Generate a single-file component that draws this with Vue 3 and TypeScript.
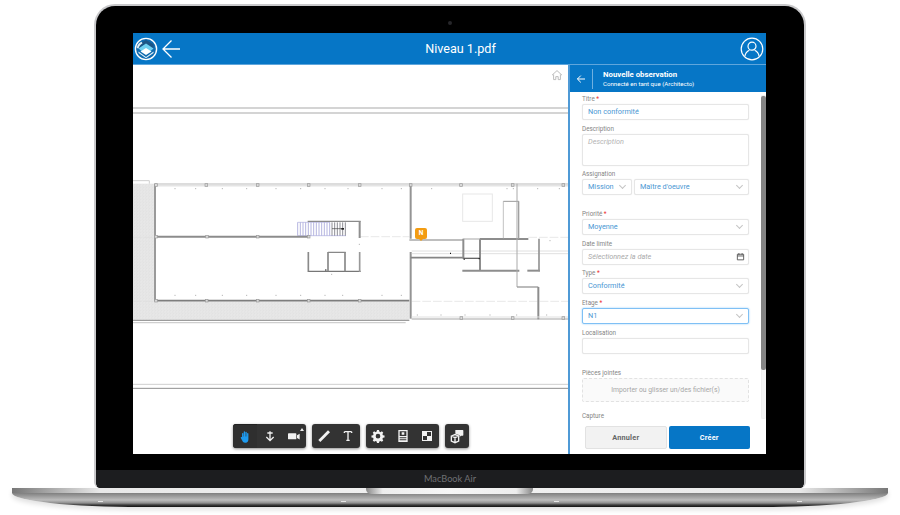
<script setup lang="ts">
type Seg = [number, number, number, number, number, string?]

interface Tool {
  fill?: string
  line?: string
  active?: boolean
  flag?: boolean
}

// the plan is traced in the coordinates of a 3x crop, hence the big numbers
const walls: Seg[] = [
  [9, 138, 1317, 138, 4, '#c6c6c6'],
  [9, 153, 1317, 153, 4, '#c6c6c6'],
  [9, 967, 1317, 967, 3, '#cfcfcf'],
  [9, 979, 1317, 979, 3, '#8f8f8f'],
  [9, 356, 58, 356, 3, '#cfcfcf'],
  [58, 356, 58, 365, 3, '#cfcfcf'],
  [75, 366, 1317, 366, 3, '#b8b8b8'],
  [75, 371, 1317, 371, 5, '#e4e4e4'],
  [75, 365, 75, 718, 6, '#9a9a9a'],
  [75, 524, 535, 524, 6, '#8c8c8c'],
  [75, 716, 838, 716, 5, '#7d7d7d'],
  [9, 775, 838, 775, 3, '#8a8a8a'],
  [9, 782, 827, 782, 4, '#cfcfcf'],
  [533, 478, 692, 478, 4, '#8a8a8a'],
  [689, 478, 689, 528, 6, '#8f8f8f'],
  [535, 570, 535, 630, 5, '#8a8a8a'],
  [535, 628, 692, 628, 4, '#777'],
  [594, 570, 594, 628, 5, '#888'],
  [645, 570, 645, 628, 5, '#888'],
  [594, 571, 647, 571, 4, '#888'],
  [689, 570, 689, 630, 5, '#999'],
  [842, 368, 842, 530, 6, '#949494'],
  [842, 570, 842, 770, 6, '#949494'],
  [838, 534, 1000, 534, 5, '#a8a8a8'],
  [845, 567, 1317, 567, 2, '#d0d0d0'],
  [845, 575, 1317, 575, 2, '#d0d0d0'],
  [842, 587, 1000, 587, 5, '#858585'],
  [1000, 530, 1000, 590, 6, '#8d8d8d'],
  [1050, 530, 1050, 626, 6, '#8d8d8d'],
  [1000, 589, 1050, 589, 4, '#666'],
  [1050, 531, 1195, 531, 6, '#8d8d8d'],
  [1000, 531, 1050, 531, 3, '#a5a5a5'],
  [997, 626, 1168, 626, 6, '#8d8d8d'],
  [1192, 626, 1230, 626, 6, '#8d8d8d'],
  [1227, 530, 1227, 628, 5, '#949494'],
  [1120, 418, 1120, 530, 2, '#a5a5a5'],
  [1120, 418, 1167, 418, 3, '#999'],
  [1166, 418, 1166, 530, 4, '#a0a0a0'],
  [1161, 365, 1161, 675, 3, '#aaa'],
  [1161, 675, 1225, 675, 4, '#999'],
  [1225, 675, 1225, 772, 6, '#8d8d8d'],
  [845, 765, 1317, 765, 3, '#e0e0e0'],
  [845, 771, 1317, 771, 3, '#a5a5a5'],
]

const columns: [number, number][] = [
  ...[78, 229, 383, 536, 689, 842, 993, 1148, 1300].map((x): [number, number] => [x, 369]),
  ...[78, 231, 383, 536].map((x): [number, number] => [x, 524]),
  ...[78, 230, 383, 536, 689].map((x): [number, number] => [x, 716]),
  ...[994, 1148, 1300].map((x): [number, number] => [x, 768]),
]

const dots: [number, number][] = [
  ...[135, 197, 277, 350, 438, 512, 585, 654, 756, 814, 905, 1131, 1150, 1223, 1288].map((x): [number, number] => [x, 380]),
  ...[135, 197, 277, 350, 438, 512, 585, 638, 756, 814].map((x): [number, number] => [x, 700]),
  ...[862, 933, 1005, 1080, 1160, 1250].map((x): [number, number] => [x, 759]),
  [688, 547], [1260, 536], [605, 637],
]

const stairs = Array.from({ length: 13 }, (_, i) => 503 + i * 8)
const stairsDark = Array.from({ length: 6 }, (_, i) => 606 + i * 8)

const toolGroups: Tool[][] = [
  [
    {
      active: true,
      fill: 'M7.6 12.6V7a1 1 0 0 1 2 0v4.4h.5V4.5a1 1 0 0 1 2 0v6.9h.5V5a1 1 0 0 1 2 0v6.4h.5V7a1 1 0 0 1 2 0v8.3c0 3-1.5 5.2-4 5.2h-1.2c-1.9 0-2.9-1.1-3.7-2.6l-2.5-4.3c-.6-1.1.9-2.1 1.7-1.1z',
    },
    { line: 'M12 5v14M8 7.5h8M6.5 13.5l5.5 5.5 5.5-5.5' },
    { fill: 'M4 8h10.5a1 1 0 0 1 1 1v7a1 1 0 0 1-1 1H4a1 1 0 0 1-1-1V9a1 1 0 0 1 1-1zM16.5 11l4-2.2v8.4l-4-2.2z', flag: true },
  ],
  [
    { fill: 'M18 3.5L21 6.5 6.5 21 3.5 18z' },
    { line: 'M6.5 5.5h11M6.5 5.5v2M17.5 5.5v2M12 5.5v13M9.5 18.5h5' },
  ],
  [
    { fill: 'M10.5 3h3l.5 2.4 1.8.8 2-1.3 2.1 2.1-1.3 2 .8 1.8 2.4.5v3l-2.4.5-.8 1.8 1.3 2-2.1 2.1-2-1.3-1.8.8-.5 2.4h-3l-.5-2.4-1.8-.8-2 1.3-2.1-2.1 1.3-2-.8-1.8-2.4-.5v-3l2.4-.5.8-1.8-1.3-2 2.1-2.1 2 1.3 1.8-.8zM12 8.8a3.5 3.5 0 1 0 0 7 3.5 3.5 0 0 0 0-7z' },
    { fill: 'M5 3h14v18H5zM7 5v7h10V5zM7 14v1.5h10V14zM7 17v1.5h10V17zM10 6.5h4V10h-4z' },
    { fill: 'M4.5 4.5h15v15h-15zM12 6v6H6v6h6v-6h6V6z' },
  ],
  [
    { line: 'M3.5 12L9 9.8l5.5 2.2v7.5L9 22l-5.5-2.5zM3.5 12L9 14.5l5.5-2.5M9 14.5V22', fill: 'M9.5 3h11a1 1 0 0 1 1 1v6.5a1 1 0 0 1-1 1H18l-2 2V11L9.5 8.5z' },
  ],
]
</script>

<template>
  <div class="page">
    <div class="lid">
      <div class="bezel">
        <span class="camera"></span>
        <div class="screen">
          <header class="appbar">
            <svg class="logo" viewBox="0 0 24 24" width="24" height="24">
              <circle cx="12" cy="12" r="10.6" fill="#0f6bb0" stroke="#fff" stroke-width="1.4" />
              <path d="M12 3l7.500 4.300v4.200L12 7 4.500 11.500V7.300z" fill="#1c5585" />
              <path d="M2.800 11c.5-3 2.200-5.200 4.700-6.200l1 1.500C6 8 5 9.500 4.600 11.500z" fill="#dfeef7" />
              <path d="M12 6.500l7.500 5-3.500 3H8l-3.500-3z" fill="#6fd0f0" />
              <path d="M12 11l5.500 3.500L12 18l-5.500-3.500z" fill="#fff" />
              <path d="M4.500 14.500L12 20l7.500-5.500V16L12 21.200 4.500 16z" fill="#dfeef7" />
            </svg>
            <svg class="back" viewBox="0 0 20 20" width="20" height="20">
              <path d="M19 10H2M10.500 1.500L2 10l8.500 8.500" fill="none" stroke="#fff" stroke-width="1.3" />
            </svg>
            <h1 class="doc-title">Niveau 1.pdf</h1>
            <svg class="user" viewBox="0 0 24 24" width="24" height="24">
              <circle cx="12" cy="12" r="10.8" fill="none" stroke="#fff" stroke-width="1.2" />
              <circle cx="12" cy="9.2" r="4" fill="none" stroke="#fff" stroke-width="1.2" />
              <path d="M4.800 19.500c.6-3.600 3-5.500 4.600-6.200M19.200 19.500c-.6-3.600-3-5.500-4.600-6.200" fill="none" stroke="#fff" stroke-width="1.2" />
            </svg>
          </header>

          <div class="workspace">
            <section class="plan">
              <svg class="drawing" viewBox="9 9 1308 1167" width="436" height="389">
                <defs>
                  <pattern id="stipple" width="9" height="9" patternUnits="userSpaceOnUse">
                    <rect width="9" height="9" fill="#e6e6e6" />
                    <rect x="1" y="2" width="2" height="2" fill="#dedede" />
                    <rect x="6" y="0" width="2" height="2" fill="#ececec" />
                    <rect x="4" y="6" width="2" height="2" fill="#dedede" />
                  </pattern>
                </defs>
                <rect x="9" y="365" width="66" height="410" fill="url(#stipple)" />
                <rect x="75" y="718" width="763" height="57" fill="url(#stipple)" />
                <rect x="998" y="396" width="89" height="82" fill="none" stroke="#e8e8e8" stroke-width="3" />
                <path d="M690 524H838M1195 526H1317M845 718H1317M9 526H75M9 718H75" fill="none" stroke="#dcdcdc" stroke-width="2" stroke-dasharray="26 6" />
                <line v-for="x in stairs" :key="x" :x1="x" :x2="x" y1="481" y2="521" stroke="#8f8fd0" stroke-width="2" />
                <path d="M503 481H600M503 521H648" stroke="#a9a9dc" stroke-width="2" fill="none" />
                <line v-for="x in stairsDark" :key="x" :x1="x" :x2="x" y1="481" y2="521" stroke="#55555f" stroke-width="2" />
                <path d="M606 500H640" stroke="#444" stroke-width="2" />
                <rect x="634" y="498" width="8" height="5" fill="#222" />
                <line
                  v-for="(w, i) in walls"
                  :key="i"
                  :x1="w[0]"
                  :y1="w[1]"
                  :x2="w[2]"
                  :y2="w[3]"
                  :stroke-width="w[4]"
                  :stroke="w[5] ?? '#8d8d8d'"
                />
                <rect
                  v-for="(c, i) in columns"
                  :key="'c' + i"
                  :x="c[0] - 4"
                  :y="c[1] - 4"
                  width="8"
                  height="8"
                  fill="#d8d8d8"
                  stroke="#9a9a9a"
                  stroke-width="2"
                />
                <rect v-for="(d, i) in dots" :key="'d' + i" :x="d[0] - 1.5" :y="d[1] - 1.5" width="3" height="3" fill="#a8a8a8" />
                <path d="M960 574h3M586 624h3M1001 592h3M1046 590h3" stroke="#111" stroke-width="4" />
              </svg>

              <svg class="home" viewBox="0 0 12 12" width="12" height="12">
                <path d="M1 6.200L6 1.600l5 4.600M2.600 5.400v5.200h2.200V7.600h2.400v3h2.200V5.400" fill="none" stroke="#bdbdbd" stroke-width="1" />
              </svg>

              <span class="marker">N</span>

              <div class="toolbar">
                <div v-for="(group, g) in toolGroups" :key="g" class="tool-group">
                  <div v-for="(tool, t) in group" :key="t" class="tool" :class="{ active: tool.active, flag: tool.flag }">
                    <svg viewBox="0 0 24 24" width="16" height="16">
                      <path v-if="tool.fill" :d="tool.fill" fill="currentColor" fill-rule="evenodd" />
                      <path v-if="tool.line" :d="tool.line" fill="none" stroke="currentColor" stroke-width="2" />
                    </svg>
                  </div>
                </div>
              </div>
            </section>

            <aside class="panel">
              <div class="panel-head">
                <svg viewBox="0 0 10 10" width="10" height="10">
                  <path d="M9 5H1.400M4.800 1.600L1.400 5l3.400 3.400" fill="none" stroke="#fff" stroke-width="1" />
                </svg>
                <span class="head-rule"></span>
                <div>
                  <div class="head-title">Nouvelle observation</div>
                  <div class="head-sub">Connecté en tant que (Architecto)</div>
                </div>
              </div>

              <div class="panel-body">
                <form class="fields" @submit.prevent>
                  <div class="field">
                    <label>Titre <em>*</em></label>
                    <div class="control value">Non conformité</div>
                  </div>
                  <div class="field">
                    <label>Description</label>
                    <div class="control area">Description</div>
                  </div>
                  <div class="field">
                    <label>Assignation</label>
                    <div class="pair">
                      <div class="control value mission">Mission<i class="chev"></i></div>
                      <div class="control value grow">Maître d'oeuvre<i class="chev"></i></div>
                    </div>
                  </div>
                  <div class="field spaced">
                    <label>Priorité <em>*</em></label>
                    <div class="control value">Moyenne<i class="chev"></i></div>
                  </div>
                  <div class="field">
                    <label>Date limite</label>
                    <div class="control hint">
                      Sélectionnez la date
                      <svg viewBox="0 0 10 10" width="9" height="9">
                        <path d="M1.500 2.500h7v6.200h-7zM1.500 4.400h7M3.200 1.200v2M6.800 1.200v2" fill="none" stroke="#555" stroke-width="1" />
                      </svg>
                    </div>
                  </div>
                  <div class="field">
                    <label>Type <em>*</em></label>
                    <div class="control value">Conformité<i class="chev"></i></div>
                  </div>
                  <div class="field">
                    <label>Etage <em>*</em></label>
                    <div class="control value focused">N1<i class="chev"></i></div>
                  </div>
                  <div class="field">
                    <label>Localisation</label>
                    <div class="control"></div>
                  </div>
                  <div class="field spaced">
                    <label>Pièces jointes</label>
                    <div class="dropzone">Importer ou glisser un/des fichier(s)</div>
                  </div>
                  <div class="field capture">
                    <label>Capture</label>
                  </div>
                </form>
                <div class="scrollbar"><span class="thumb"></span></div>
              </div>

              <div class="panel-foot">
                <button type="button" class="btn cancel">Annuler</button>
                <button type="button" class="btn create">Créer</button>
              </div>
            </aside>
          </div>
        </div>
      </div>
      <div class="chin">MacBook Air</div>
    </div>
    <div class="base"><span class="notch"></span></div>
  </div>
</template>

<style scoped>
.page {
  width: 900px;
  height: 515px;
  padding-top: 4px;
  box-sizing: border-box;
  background: #fff;
  display: flex;
  flex-direction: column;
  align-items: center;
  overflow: hidden;
  font-family: Roboto, "Liberation Sans", sans-serif;
}
.lid {
  width: 712px;
  height: 484px;
  box-sizing: border-box;
  border: 2px solid #c9c9cb;
  border-bottom: 0;
  border-radius: 21px 21px 6px 6px;
  background: #000;
  display: flex;
  flex-direction: column;
  overflow: hidden;
}
.bezel {
  position: relative;
  padding: 27px 38px 16px 37px;
}
.camera {
  position: absolute;
  left: 352px;
  top: 15px;
  width: 4px;
  height: 4px;
  border-radius: 50%;
  background: #26262a;
}
.screen {
  width: 633px;
  height: 421px;
  display: flex;
  flex-direction: column;
  background: #fff;
  overflow: hidden;
}
.appbar {
  height: 31px;
  flex: none;
  background: #0676c6;
  border-bottom: 1px solid #5fa6dc;
  display: flex;
  align-items: center;
  padding: 0 2px 0 1px;
}
.back {
  margin-left: 3px;
}
.doc-title {
  flex: 1;
  margin: 0;
  text-align: center;
  color: #fff;
  font-size: 12.6px;
  font-weight: 400;
  font-family: Roboto, "Open Sans", sans-serif;
}
.workspace {
  flex: 1;
  min-height: 0;
  display: flex;
}
.plan {
  position: relative;
  width: 435px;
  flex: none;
  overflow: hidden;
}
.drawing {
  display: block;
}
.home {
  position: absolute;
  right: 5px;
  top: 4px;
}
.marker {
  position: absolute;
  left: 282px;
  top: 163px;
  width: 12px;
  height: 11px;
  border-radius: 2px;
  background: #f39c12;
  color: #fff;
  font-size: 6.5px;
  font-weight: 700;
  line-height: 11px;
  text-align: center;
}
.marker::after {
  content: "";
  position: absolute;
  left: 4px;
  top: 11px;
  border: 2px solid transparent;
  border-top-color: #f39c12;
  border-bottom: 0;
}
.toolbar {
  position: absolute;
  left: 100px;
  bottom: 6px;
  display: flex;
  gap: 5.5px;
}
.tool-group {
  height: 24px;
  display: flex;
  background: #333;
  border-radius: 3px;
  box-shadow: 0 1px 3px rgba(0, 0, 0, 0.45);
}
.tool {
  position: relative;
  width: 24.4px;
  display: flex;
  align-items: center;
  justify-content: center;
  color: #f2f2f2;
}
.tool.active {
  color: #1e9bf0;
  background: #2f2f2f;
  border-top: 1px solid #222;
  border-radius: 3px 0 0 3px;
  box-sizing: border-box;
}
.tool.flag::after {
  content: "";
  position: absolute;
  right: 2px;
  top: 4px;
  border: 2px solid transparent;
  border-bottom: 3px solid #eee;
  border-top: 0;
}
.panel {
  flex: 1;
  min-width: 0;
  display: flex;
  flex-direction: column;
  border-left: 2px solid #4f9ad6;
  background: #fff;
}
.panel-head {
  height: 27px;
  flex: none;
  background: #0676c6;
  display: flex;
  align-items: center;
  color: #fff;
  padding-left: 6px;
}
.head-rule {
  width: 1px;
  height: 20px;
  margin: 0 10px 0 6px;
  background: #6fb0e0;
}
.head-title {
  font-size: 7.8px;
  font-weight: 700;
  line-height: 10px;
}
.head-sub {
  font-size: 6.1px;
  line-height: 8px;
}
.panel-body {
  flex: 1;
  min-height: 0;
  display: flex;
  overflow: hidden;
}
.fields {
  width: 167px;
  margin: 3px 0 0 12px;
  display: flex;
  flex-direction: column;
  gap: 4.7px;
  flex: none;
}
.field label {
  display: block;
  height: 9px;
  font-size: 6.3px;
  line-height: 9px;
  color: #858585;
}
.field em {
  color: #e33;
  font-style: normal;
}
.field.spaced {
  margin-top: 10px;
}
.field.capture {
  margin-top: 5.5px;
}
.control {
  position: relative;
  height: 16px;
  box-sizing: border-box;
  border: 1px solid #e6e6e6;
  border-radius: 2px;
  box-shadow: 0 0 1px rgba(0, 0, 0, 0.12);
  background: #fff;
  padding-left: 5px;
  font-size: 7.3px;
  line-height: 14px;
}
.value {
  color: #4a97d3;
}
.hint {
  color: #aaa;
  font-style: italic;
  display: flex;
  align-items: center;
  justify-content: space-between;
  padding-right: 3px;
}
.area {
  height: 32px;
  color: #b4b4b4;
  font-style: italic;
}
.focused {
  border-color: #7fc0f5;
  box-shadow: 0 0 2px #8cc8f7;
}
.pair {
  display: flex;
  gap: 2px;
}
.mission {
  width: 50px;
  flex: none;
}
.grow {
  flex: 1;
}
.chev {
  position: absolute;
  right: 6px;
  top: 3px;
  width: 4px;
  height: 4px;
  border-right: 1px solid #c4c4c4;
  border-bottom: 1px solid #c4c4c4;
  transform: rotate(45deg);
}
.dropzone {
  height: 24px;
  box-sizing: border-box;
  border: 1px dashed #e2e2e2;
  border-radius: 2px;
  background: #fafafa;
  color: #a6a6a6;
  font-size: 6.8px;
  line-height: 22px;
  text-align: center;
}
.scrollbar {
  width: 5px;
  margin: 3px 0 1px auto;
  border: 1px solid #eee;
  border-right: 0;
  box-sizing: border-box;
  border-radius: 2px;
  background: #f4f4f4;
}
.thumb {
  display: block;
  height: 274px;
  margin-left: -1px;
  border-radius: 2px;
  background: #858585;
}
.panel-foot {
  height: 34px;
  flex: none;
  display: flex;
  gap: 2px;
  padding: 6px 0 5px 15px;
  box-sizing: border-box;
}
.btn {
  width: 81.5px;
  height: 23px;
  border-radius: 2px;
  font-family: inherit;
  font-size: 7.3px;
  font-weight: 700;
  letter-spacing: 0.2px;
  padding: 0;
}
.cancel {
  background: #f2f2f2;
  border: 1px solid #e2e2e2;
  color: #666;
}
.create {
  background: #0676c6;
  border: 0;
  color: #fff;
}
.chin {
  flex: 1;
  background: #1c1d1f;
  color: #6f7073;
  font-family: Lato, "Open Sans", sans-serif;
  font-size: 9.2px;
  line-height: 18px;
  text-align: center;
}
.base {
  position: relative;
  width: 876px;
  height: 19px;
  flex: none;
  border-radius: 0 0 130px 130px / 0 0 14px 14px;
  box-shadow: 0 3px 5px rgba(0, 0, 0, 0.12);
  background:
    linear-gradient(#e6e6e6, #e6e6e6) 86px 13px / 5px 1px no-repeat,
    linear-gradient(#e6e6e6, #e6e6e6) 329px 13px / 5px 1px no-repeat,
    linear-gradient(#e6e6e6, #e6e6e6) 542px 13px / 5px 1px no-repeat,
    linear-gradient(#e6e6e6, #e6e6e6) 785px 13px / 5px 1px no-repeat,
    linear-gradient(to bottom, transparent 0, transparent 5px, #7f7f7f 5px, #bdbdbd 12px, #8f8f8f 15px, #3a3a3a 17px, #111 19px),
    linear-gradient(to right, #777 0, #e8e8e8 10%, #f2f2f2 50%, #e8e8e8 90%, #777 100%);
}
.notch {
  position: absolute;
  left: 354px;
  top: 0;
  width: 167px;
  height: 6px;
  border-radius: 0 0 5px 5px;
  background: linear-gradient(to right, #888, #ededed 10%, #f6f6f6 50%, #ededed 90%, #888);
}
</style>

<style>
html,
body {
  margin: 0;
  background: #fff;
}
</style>
